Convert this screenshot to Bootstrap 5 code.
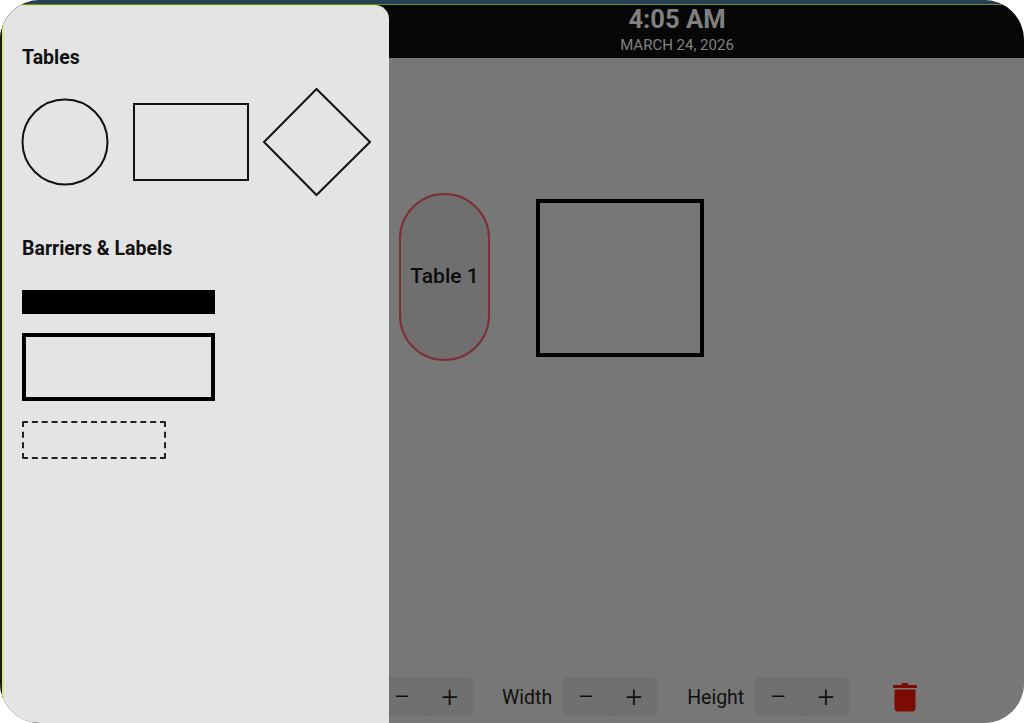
<!DOCTYPE html>
<html lang="en">
<head>
  <meta charset="UTF-8" />
  <meta name="viewport" content="width=device-width, initial-scale=1">
  <title>Floor plan editor</title>
  <link href="https://cdn.jsdelivr.net/npm/bootstrap@5.3.0/dist/css/bootstrap.min.css" rel="stylesheet">
  <style>
    html, body {
      height: 100%;
      margin: 0;
      background: #fff;
      overflow: hidden;
    }

    body {
      font-family: Roboto, "Liberation Sans", sans-serif;
    }

    .app-frame {
      position: relative;
      width: 1024px;
      height: 723px;
      border-radius: 40px;
      overflow: hidden;
      background: #777;
    }

    .top-strip {
      height: 5px;
      background: #26404f;
      border-bottom: 1px solid #6d8a3c;
    }

    .clock-bar {
      height: 53px;
      background: #070707;
      padding-left: 330px;
      color: #808080;
      line-height: 1;
    }

    .clock-time {
      font-size: 25.6px;
      font-weight: 700;
      margin-top: 2px;
    }

    .clock-date {
      font-size: 15px;
      margin-top: 5px;
    }

    .canvas-area {
      position: relative;
      height: 665px;
      background: #777;
    }

    .table-pill {
      position: absolute;
      left: 399px;
      top: 135px;
      width: 91px;
      height: 168px;
      border: 2px solid #7f2f33;
      border-radius: 46px;
      background: #6f6f6f;
      color: #0c0c0c;
      font-size: 21px;
      font-weight: 500;
    }

    .table-square {
      position: absolute;
      left: 536px;
      top: 141px;
      width: 168px;
      height: 158px;
      border: 4px solid #000;
    }

    .edit-bar {
      position: absolute;
      left: 378px;
      top: 619px;
      color: #111;
      font-size: 19.5px;
    }

    .step-group {
      display: flex;
      height: 39px;
      background: #707070;
      border-radius: 6px;
      overflow: hidden;
    }

    .step-btn {
      width: 47.5px;
      border: 0;
      padding: 0;
      background: transparent;
      color: #111;
      font-size: 30px;
      font-weight: 300;
      line-height: 1;
    }

    .step-btn + .step-btn {
      border-left: 1px solid #6a6a6a;
    }

    .width-label {
      margin-left: 29px;
      margin-right: 10px;
      padding-top: 2px;
    }

    .height-label {
      margin-left: 30px;
      margin-right: 10px;
      padding-top: 2px;
    }

    .trash-btn {
      margin-left: 44px;
      line-height: 0;
    }

    .side-drawer {
      position: absolute;
      left: 2px;
      top: 5px;
      bottom: 0;
      width: 387px;
      padding: 41px 18px 0 18px;
      background: #e4e4e4;
      border-left: 2px solid #d6e88a;
      border-top: 1px solid #d6e88a;
      border-top-right-radius: 14px;
      box-shadow: -2px 0 0 #1a1c0c;
      color: #111;
    }

    .drawer-title {
      font-size: 19.5px;
      font-weight: 700;
      line-height: 22px;
      margin: 0;
    }

    .drawer-title-next {
      margin-top: 40px;
    }

    .shape-row {
      margin-top: 19px;
      margin-left: -1px;
      display: block;
    }

    .bar-solid {
      width: 193px;
      height: 24px;
      background: #000;
      margin-top: 30px;
    }

    .bar-outline {
      width: 193px;
      height: 68px;
      border: 4px solid #000;
      margin-top: 19px;
    }

    .label-dashed {
      width: 144px;
      height: 38px;
      border: 2px dashed #222;
      border-radius: 2px;
      margin-top: 20px;
    }
  </style>
</head>
<body>

  <div class="app-frame">
    <div class="top-strip"></div>

    <div class="clock-bar d-flex flex-column align-items-center">
      <div class="clock-time">4:05 AM</div>
      <div class="clock-date">MARCH 24, 2026</div>
    </div>

    <div class="canvas-area">
      <div class="table-pill d-flex align-items-center justify-content-center">Table 1</div>
      <div class="table-square"></div>

      <div class="edit-bar d-flex align-items-center">
        <div class="step-group">
          <button class="step-btn">&minus;</button>
          <button class="step-btn">+</button>
        </div>
        <span class="width-label">Width</span>
        <div class="step-group">
          <button class="step-btn">&minus;</button>
          <button class="step-btn">+</button>
        </div>
        <span class="height-label">Height</span>
        <div class="step-group">
          <button class="step-btn">&minus;</button>
          <button class="step-btn">+</button>
        </div>
        <span class="trash-btn">
          <svg width="24" height="30" viewBox="0 0 24 30">
            <path fill="#7a0c02" d="M8.5 2.5Q8.500 1 10 1h4q1.500 0 1.500 1.500V3H23q1 0 1 1v1.500q0 .5-.5.500H.5Q0 6 0 5.500V4q0-1 1-1h7.500z"/>
            <path fill="#7a0c02" d="M1.500 7.500h21V26q0 3.500-3.500 3.500H5Q1.500 29.500 1.500 26z"/>
          </svg>
        </span>
      </div>
    </div>

    <aside class="side-drawer">
      <h2 class="drawer-title">Tables</h2>
      <svg class="shape-row" width="352" height="110" viewBox="0 0 352 110" fill="none" stroke="#111" stroke-width="2">
        <circle cx="44" cy="54" r="42.500"/>
        <rect x="113" y="16" width="114" height="76"/>
        <path d="M295.500 1L349 54 295.500 107 243 54z"/>
      </svg>
      <h2 class="drawer-title drawer-title-next">Barriers &amp; Labels</h2>
      <div class="bar-solid"></div>
      <div class="bar-outline"></div>
      <div class="label-dashed"></div>
    </aside>
  </div>

  <script src="https://cdn.jsdelivr.net/npm/bootstrap@5.3.0/dist/js/bootstrap.bundle.min.js"></script>
</body>
</html>
